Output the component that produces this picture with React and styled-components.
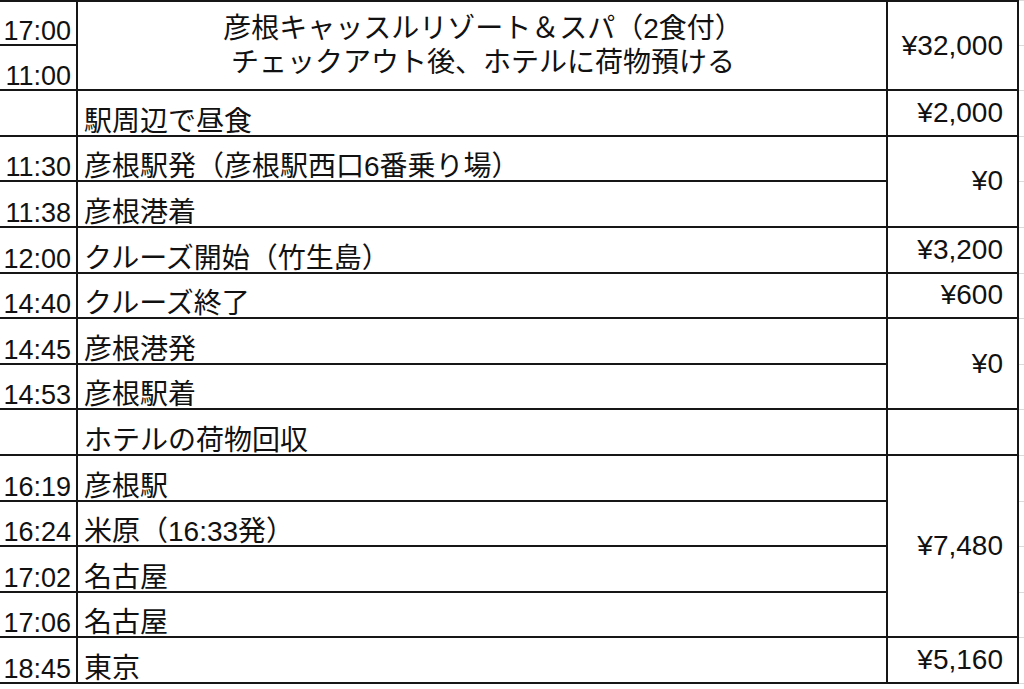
import React from 'react';
import styled, { createGlobalStyle } from 'styled-components';

const GlobalStyle = createGlobalStyle`
  html, body {
    margin: 0;
    padding: 0;
    background: #ffffff;
  }
  body {
    width: 1024px;
    height: 689px;
    overflow: hidden;
    font-family: "Liberation Sans", "Noto Sans CJK JP", sans-serif;
    color: #111111;
  }
`;

const Sheet = styled.div`
  display: grid;
  grid-template-columns: 78px 810px 131px 10px;
  grid-auto-rows: 45.6px;
  width: 1029px;
  font-size: 28px;
`;

const Cell = styled.div`
  grid-row: ${(p) => p.$row} / span ${(p) => p.$span || 1};
  box-sizing: border-box;
  display: flex;
  border-bottom: 2px solid #161616;
  border-top: ${(p) => (p.$row === 1 ? '2px solid #161616' : 'none')};
  line-height: 26px;
  white-space: nowrap;
`;

const TimeCell = styled(Cell)`
  grid-column: 1;
  justify-content: flex-end;
  align-items: flex-end;
  font-size: 27px;
  padding-right: 5px;
  border-right: 2px solid #161616;
`;

const DescCell = styled(Cell)`
  grid-column: 2;
  align-items: ${(p) => (p.$center ? 'center' : 'flex-end')};
  justify-content: ${(p) => (p.$center ? 'center' : 'flex-start')};
  padding-left: 6px;
  border-right: 2px solid #161616;
`;

const HotelText = styled.div`
  text-align: center;
  line-height: 34px;
  padding-right: 4px;
`;

const PriceCell = styled(Cell)`
  grid-column: 3;
  justify-content: flex-end;
  align-items: center;
  line-height: 32px;
  padding-right: 14px;
  border-right: 2px solid #161616;
`;

const Ghost = styled.div`
  grid-column: 4;
  grid-row: ${(p) => p.$row};
  box-sizing: border-box;
  border-bottom: 1px solid #dadada;
  border-top: ${(p) => (p.$row === 1 ? '1px solid #dadada' : 'none')};
`;

const rows = [
  { time: '17:00', desc: ['彦根キャッスルリゾート＆スパ（2食付）', 'チェックアウト後、ホテルに荷物預ける'], descSpan: 2, price: '¥32,000', priceSpan: 2 },
  { time: '11:00' },
  { time: '', desc: '駅周辺で昼食', price: '¥2,000' },
  { time: '11:30', desc: '彦根駅発（彦根駅西口6番乗り場）', price: '¥0', priceSpan: 2 },
  { time: '11:38', desc: '彦根港着' },
  { time: '12:00', desc: 'クルーズ開始（竹生島）', price: '¥3,200' },
  { time: '14:40', desc: 'クルーズ終了', price: '¥600' },
  { time: '14:45', desc: '彦根港発', price: '¥0', priceSpan: 2 },
  { time: '14:53', desc: '彦根駅着' },
  { time: '', desc: 'ホテルの荷物回収', price: '' },
  { time: '16:19', desc: '彦根駅', price: '¥7,480', priceSpan: 4 },
  { time: '16:24', desc: '米原（16:33発）' },
  { time: '17:02', desc: '名古屋' },
  { time: '17:06', desc: '名古屋' },
  { time: '18:45', desc: '東京', price: '¥5,160' },
];

const App = () => {
  return (
    <>
      <GlobalStyle />
      <Sheet>
        {rows.map((r, i) => {
          const row = i + 1;
          return (
            <React.Fragment key={row}>
              <TimeCell $row={row}>{r.time}</TimeCell>
              {r.desc !== undefined &&
                (Array.isArray(r.desc) ? (
                  <DescCell $row={row} $span={r.descSpan} $center>
                    <HotelText>
                      {r.desc[0]}
                      <br />
                      {r.desc[1]}
                    </HotelText>
                  </DescCell>
                ) : (
                  <DescCell $row={row}>{r.desc}</DescCell>
                ))}
              {r.price !== undefined && (
                <PriceCell $row={row} $span={r.priceSpan}>
                  {r.price}
                </PriceCell>
              )}
              <Ghost $row={row} />
            </React.Fragment>
          );
        })}
      </Sheet>
    </>
  );
};

export default App;
